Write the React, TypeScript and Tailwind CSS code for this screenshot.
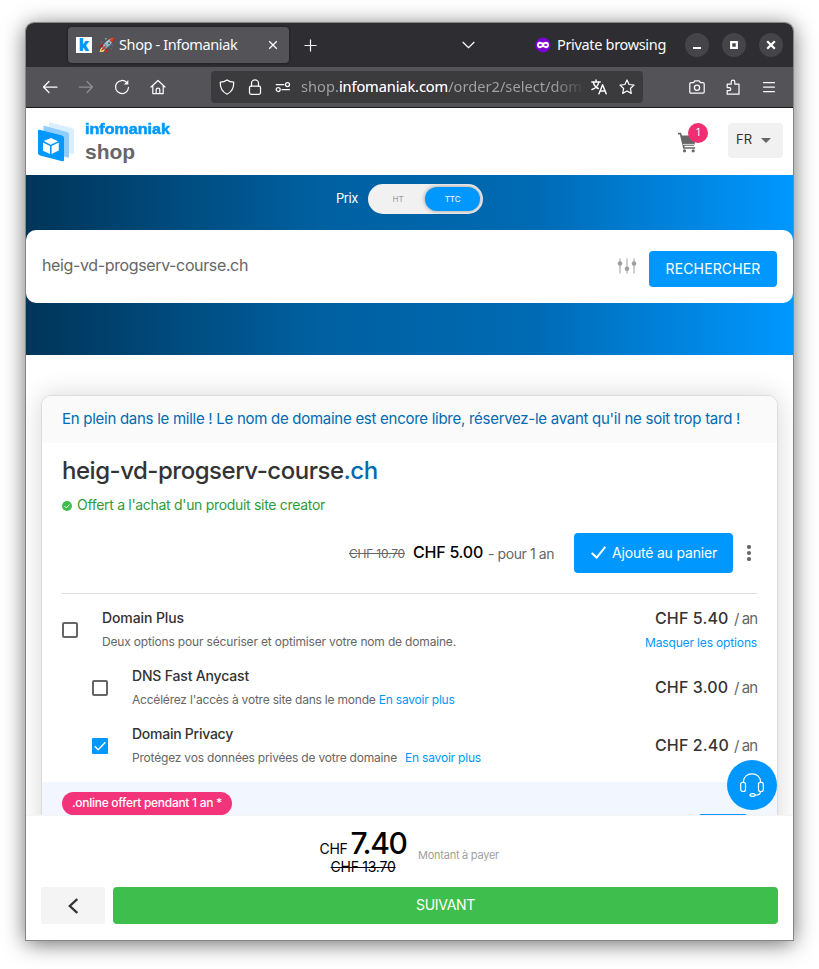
import type { ReactNode } from "react";

const sans = "font-['Inter','Liberation_Sans',sans-serif]";

function TitleBar() {
  return (
    <div className="flex h-[44px] shrink-0 items-center bg-[#2e2d32] pl-[42px] text-[14.5px] text-[#fbfbfe]">
      <div className="flex h-[36px] w-[221px] shrink-0 items-center rounded-[4px] bg-[#545358] pl-2 shadow-[0_0_3px_rgba(0,0,0,0.5)]">
        <div className="flex size-4 items-center justify-center bg-white font-['Inter',sans-serif] text-[17px] leading-[16px] font-black text-[#0098ff]">
          k
        </div>
        <span className="ml-[6px] w-[21px] shrink-0 font-['Noto_Color_Emoji'] text-[14px] leading-none">🚀</span>
        <span className="w-[149px] shrink-0 whitespace-pre tracking-[-0.38px]">Shop - Infomaniak</span>
        <svg className="size-[10px] shrink-0" viewBox="0 0 10 10" fill="none" stroke="currentColor" strokeWidth="1.3">
          <path d="M1.200 1.200l7.600 7.600M8.800 1.200L1.200 8.800" />
        </svg>
      </div>
      <svg className="ml-[15px] size-[13px]" viewBox="0 0 13 13" fill="none" stroke="currentColor" strokeWidth="1.2">
        <path d="M6.5.5v12M.5 6.5h12" />
      </svg>
      <svg className="ml-[145px] h-[8px] w-[13px]" viewBox="0 0 13 8" fill="none" stroke="currentColor" strokeWidth="1.3">
        <path d="M.7 1l5.800 5.600L12.300 1" />
      </svg>
      <svg className="ml-[60px] size-4" viewBox="0 0 16 16">
        <circle cx="8" cy="8" r="7.6" fill="#7a05d0" />
        <path
          d="M2 8c0-2 1.200-3.200 3-3.200 1.200 0 2 .8 3 .8s1.800-.8 3-.8c1.800 0 3 1.200 3 3.200s-1.300 3.200-3 3.200c-1.300 0-2-1.200-3-1.200s-1.700 1.200-3 1.200c-1.700 0-3-1.200-3-3.200z"
          fill="#fff"
        />
        <ellipse cx="5.300" cy="8" rx="1.600" ry="1.100" fill="#7a05d0" />
        <ellipse cx="10.700" cy="8" rx="1.600" ry="1.100" fill="#7a05d0" />
      </svg>
      <span className="ml-[6px] w-[128px] whitespace-pre tracking-[-0.33px]">Private browsing</span>
      <div className="flex gap-[13px]">
        <WindowButton>
          <path d="M8 15h8" strokeWidth="2.200" />
        </WindowButton>
        <WindowButton>
          <path d="M9.200 9.200h5.600v5.600H9.200z" strokeWidth="2.200" />
        </WindowButton>
        <WindowButton>
          <path d="M8.200 8.200l7.600 7.600M15.800 8.200l-7.600 7.600" strokeWidth="2.200" />
        </WindowButton>
      </div>
    </div>
  );
}

function WindowButton({ children }: { children: ReactNode }) {
  return (
    <div className="flex size-6 items-center justify-center rounded-full bg-[#454449]">
      <svg className="size-6" viewBox="0 0 24 24" fill="none" stroke="#fff">
        {children}
      </svg>
    </div>
  );
}

function Glyph({ className, children }: { className?: string; children: ReactNode }) {
  return (
    <svg
      className={`size-4 shrink-0 ${className ?? ""}`}
      viewBox="0 0 16 16"
      fill="none"
      stroke="currentColor"
      strokeWidth="1.250"
      strokeLinecap="round"
      strokeLinejoin="round"
    >
      {children}
    </svg>
  );
}

function NavBar() {
  return (
    <div className="flex h-[41px] shrink-0 items-center border-b border-[#1c1b22] bg-[#545358] pl-4 text-[#fbfbfe]">
      <Glyph>
        <path d="M15 8H1.500M7 2.500L1.500 8 7 13.500" />
      </Glyph>
      <Glyph className="ml-[20px] text-[#8f8e93]">
        <path d="M1 8h13.500M9 2.500L14.500 8 9 13.500" />
      </Glyph>
      <Glyph className="ml-[20px]">
        <path d="M14.500 8.500A6.500 6.500 0 1 1 12.800 3.600" />
        <path d="M14.300 1v4.500H9.800z" fill="currentColor" stroke="none" />
      </Glyph>
      <Glyph className="ml-[20px]">
        <path d="M1 8l7-6.500L15 8M2.800 6.500v8h10.400v-8M6.200 14.500v-3.700a1.800 1.800 0 0 1 3.600 0v3.700" />
      </Glyph>
      <div className="ml-[45px] flex h-8 w-[432px] shrink-0 items-center rounded-[4px] bg-[#3b3b3d] pl-2">
        <Glyph>
          <path d="M8 .9c2 1.600 4.300 2.200 6.700 2.200.3 5.200-2 9.700-6.700 12.100C3.300 12.800 1 8.300 1.300 3.100 3.700 3.100 6 2.500 8 .9z" />
        </Glyph>
        <Glyph className="ml-[12px]">
          <rect x="2.500" y="7" width="11" height="8.300" rx="1.500" />
          <path d="M4.500 7V4.300a3.500 3.500 0 0 1 7 0V7" />
        </Glyph>
        <Glyph className="ml-[12px]">
          <path d="M1.200 5.500H9M7 10.500h7.500" />
          <circle cx="12.500" cy="5.500" r="2" />
          <circle cx="3.200" cy="10.500" r="2" />
        </Glyph>
        <div className="ml-[10px] w-[281px] shrink-0 overflow-hidden bg-[linear-gradient(90deg,#a3a3a5_90%,#3b3b3d_101%)] bg-clip-text text-[14.6px] tracking-[0.03px] whitespace-pre text-transparent">
          shop.<span className="tracking-[-0.1px] text-[#fbfbfe]">infomaniak.com</span>/order2/select/dom
        </div>
        <Glyph className="ml-[9px]">
          <path d="M.8 3h8.400M5 1v2M2.300 3c.6 3 2.700 5.500 5 6.500M7.800 3C7.300 6.500 4 9.500 1 10.500" strokeWidth="1.500" />
          <path d="M8 14.800l3.600-9 3.600 9M9.300 12h4.700" strokeWidth="1.500" />
        </Glyph>
        <Glyph className="ml-[12px]">
          <path d="M8 1l2.100 4.500 4.900.6-3.600 3.400.9 4.900L8 12l-4.300 2.400.9-4.900L1 6.100l4.900-.6z" />
        </Glyph>
      </div>
      <Glyph className="ml-[46px]">
        <path d="M2 3.700h2.600l1.200-1.900h4.400l1.200 1.900H14a1.200 1.200 0 0 1 1.200 1.200v8a1.200 1.200 0 0 1-1.200 1.200H2a1.200 1.200 0 0 1-1.200-1.200v-8A1.200 1.200 0 0 1 2 3.700z" />
        <circle cx="8" cy="8.700" r="2.600" />
      </Glyph>
      <Glyph className="ml-[20px]">
        <path d="M2.200 7.500V5.200h4V3a1.800 1.800 0 0 1 3.600 0v2.200h4.200v10H2.200v-3.500h2a1.600 1.600 0 0 0 0-3.200h-2z" />
      </Glyph>
      <Glyph className="ml-[20px]">
        <path d="M2.500 3.500h11M2.500 8h11M2.500 12.500h11" />
      </Glyph>
    </div>
  );
}

function ShopHeader() {
  return (
    <header className="flex h-[67px] shrink-0 items-center bg-white pl-[11px]">
      <svg className="h-[42px] w-[38px]" viewBox="0 0 38 42">
        <path d="M12 2.500Q12 1 13.500 1.400L35 7q2 .7 2 2.500V32q0 1.500-1.500 1.100L14 27q-2-.7-2-2.500z" fill="#d9eeff" />
        <path d="M6.500 6Q6.500 4.500 8 4.900L30 11q2 .7 2 2.500V35.500q0 1.500-1.500 1.100L8.500 31q-2-.7-2-2.500z" fill="#8ecdff" />
        <path d="M1 10Q1 8.300 2.700 8.800L25 14.600q2 .7 2 2.500V39q0 1.700-1.700 1.200L3 34.600q-2-.7-2-2.500z" fill="#0098ff" />
        <path d="M14 17l7 3.200-7.300 3.500L6.700 20zM6 21.500l7 3.500v8l-7-3.300zM21.800 21.500v8L14.600 33v-8z" fill="#fff" />
      </svg>
      <div className="ml-[10px] flex flex-col font-['Liberation_Sans',sans-serif] font-bold">
        <span className="origin-left scale-x-[1.150] text-[14px] leading-[20px] text-[#0098ff] [-webkit-text-stroke:0.5px_#0098ff]">infomaniak</span>
        <span className="text-[21px] leading-[26px] text-[#666]">shop</span>
      </div>
      <div className="relative ml-auto h-[30px] w-[31px]">
        <svg className="mt-[5px] size-[21px]" viewBox="0 0 21 21">
          <path d="M1 .8h3l1 2.700h15l-3 10.300H7.200l.5 1.400h10.500v1.600H6.200L2.900 2.400H1z" fill="#666" />
          <path d="M5.800 12.400h11.300" stroke="#fff" strokeWidth=".8" />
          <circle cx="7.500" cy="18.800" r="1.600" fill="#666" />
          <circle cx="16.200" cy="18.800" r="1.600" fill="#666" />
        </svg>
        <span className="absolute top-[-4px] right-0 flex size-5 items-center justify-center rounded-full bg-[#f02e71] text-[10px] text-white">
          1
        </span>
      </div>
      <div className="mr-[10px] mb-[2px] ml-[20px] flex h-[35px] w-[55px] items-center rounded-[4px] bg-[#f1f1f1] pb-px pl-2 text-[13px] text-[#333]">
        FR
        <svg className="ml-[9px] h-[5px] w-[10px]" viewBox="0 0 10 5">
          <path d="M0 0h10L5 5z" fill="#666" />
        </svg>
      </div>
    </header>
  );
}

function SearchBand() {
  return (
    <section className="flex h-[180px] shrink-0 flex-col bg-[linear-gradient(90deg,#003558_0%,#0060a0_38%,#006ab3_66%,#0098ff_100%)]">
      <div className="flex h-[55px] items-start justify-center pt-[9px]">
        <span className="mr-[10px] text-[13px] leading-[29px] tracking-[-0.35px] text-white">Prix</span>
        <div className="flex h-[30px] w-[115px] items-center rounded-full bg-[#f1f1f1] p-[3px] text-[8px] text-[#999]">
          <span className="w-[54px] text-center">HT</span>
          <span className="flex h-6 w-[55px] items-center justify-center rounded-full bg-[#0098ff] text-white shadow-[0_0_4px_rgba(0,0,0,0.4)]">
            TTC
          </span>
        </div>
      </div>
      <div className="flex h-[73px] items-center rounded-[10px] bg-white px-4">
        <span className="pb-[4px] text-[16px] tracking-[-0.37px] text-[#666]">heig-vd-progserv-course.ch</span>
        <svg className="mr-3 mb-px ml-auto h-4 w-5" viewBox="0 0 20 16">
          <path d="M3 .5v15M10 .5v15M17 .5v15" stroke="#9f9f9f" strokeWidth="1" />
          <circle cx="3" cy="5.500" r="2.300" fill="#9f9f9f" />
          <circle cx="10" cy="10.800" r="2.300" fill="#9f9f9f" />
          <circle cx="17" cy="5.500" r="2.300" fill="#9f9f9f" />
        </svg>
        <button className="mt-[5px] h-9 w-32 rounded-[4px] bg-[#0098ff] pb-[2px] text-[14px] tracking-[0.14px] text-white">
          RECHERCHER
        </button>
      </div>
    </section>
  );
}

function CheckBox({ checked }: { checked?: boolean }) {
  return checked ? (
    <span className="flex size-4 shrink-0 items-center justify-center rounded-[1px] bg-[#0098ff]">
      <svg className="size-4" viewBox="0 0 16 16" fill="none" stroke="#fff" strokeWidth="1.500">
        <path d="M2.700 8.300l3.500 3.400 7.200-7.400" />
      </svg>
    </span>
  ) : (
    <span className="size-4 shrink-0 rounded-[2px] border-2 border-[#666]" />
  );
}

function Option(props: { nested?: boolean; checked?: boolean; title: ReactNode; text: ReactNode; price: string; extra?: ReactNode }) {
  return (
    <div className={`flex h-12 items-center ${props.nested ? "pl-[30px]" : ""}`}>
      <CheckBox checked={props.checked} />
      <div className="ml-6 flex flex-col whitespace-pre">
        <span className="text-[14px] leading-6 font-medium text-[#333]">{props.title}</span>
        <span className="text-[12px] leading-6 text-[#666]">{props.text}</span>
      </div>
      <div className="ml-auto flex flex-col items-end whitespace-pre">
        <div className={`flex items-baseline text-[16px] leading-6 text-[#666] ${props.nested ? "pb-[2px]" : ""}`}>
          <span className="mr-[5px] w-[74px] font-medium tracking-[0.13px] text-[#333]">{props.price}</span>
          <span className="w-[23px] text-[15px] tracking-[-0.95px]">/ an</span>
        </div>
        {props.extra}
      </div>
    </div>
  );
}

function ResultCard() {
  return (
    <section className="mx-[15px] mt-[40px] flex h-[500px] shrink-0 flex-col overflow-hidden rounded-[10px] border border-[#dcdcdc] bg-white shadow-[0_0_26px_rgba(0,0,0,0.16)]">
      <div className="h-[47px] shrink-0 bg-[#fafafa] pl-5 text-[15px] leading-[46px] tracking-[-0.273px] whitespace-pre text-[#006ab3]">
        En plein dans le mille ! Le nom de domaine est encore libre, réservez-le avant qu'il ne soit trop tard !
      </div>
      <div className="mx-5 flex flex-col border-b border-[#dcdcdc] pt-[10px] pb-5">
        <h1 className="text-[24px] leading-[36px] font-medium tracking-[-0.48px] text-[#333]">
          heig-vd-progserv-course<span className="text-[#006ab3]">.ch</span>
        </h1>
        <div className="mt-[7px] flex h-5 items-center text-[14px] leading-[18px] tracking-[-0.306px] text-[#2e9b3b]">
          <svg className="mr-[5px] size-[10px]" viewBox="0 0 10 10">
            <circle cx="5" cy="5" r="5" fill="#3ebf4d" />
            <path d="M2.600 5.200l1.700 1.700 3.200-3.400" fill="none" stroke="#fff" strokeWidth="1" />
          </svg>
          <span className="pb-[2px]">Offert a l'achat d'un produit site creator</span>
        </div>
        <div className="mt-[17px] flex h-10 items-center justify-end whitespace-pre text-[#666]">
          <span className="mr-2 pt-px text-[12px] tracking-[-0.194px] line-through">CHF 10.70</span>
          <span className="mr-[5px] pb-[2px] text-[16px] font-medium tracking-[-0.238px] text-black">CHF 5.00</span>
          <span className="mr-5 text-[14px] tracking-[-0.419px]">- pour 1 an</span>
          <button className="flex h-10 w-[159px] items-center rounded-[4px] bg-[#0098ff] pb-[2px] pl-[17px] text-[14px] tracking-[-0.188px] text-white">
            <svg className="mt-px mr-[6px] h-[13px] w-[15px]" viewBox="0 0 15 13" fill="none" stroke="#fff" strokeWidth="2">
              <path d="M.7 7l5 4.600L14.300.8" />
            </svg>
            Ajouté au panier
          </button>
          <svg className="mr-[5px] ml-[13px] h-4 w-[6px]" viewBox="0 0 6 16" fill="#666">
            <circle cx="3" cy="2" r="2.100" />
            <circle cx="3" cy="8" r="2.100" />
            <circle cx="3" cy="14" r="2.100" />
          </svg>
        </div>
      </div>
      <div className="mx-5 flex flex-col gap-[10px] py-3">
        <Option
          title={<span className="tracking-[-0.1px]">Domain Plus</span>}
          text={<span className="tracking-[-0.169px]">Deux options pour sécuriser et optimiser votre nom de domaine.</span>}
          price="CHF 5.40"
          extra={<span className="text-[12px] leading-6 tracking-[-0.15px] text-[#0098ff]">Masquer les options</span>}
        />
        <Option
          nested
          title={<span className="tracking-[-0.175px]">DNS Fast Anycast</span>}
          text={
            <span className="tracking-[-0.21px]">
              Accélérez l'accès à votre site dans le monde <span className="text-[#0098ff]">En savoir plus</span>
            </span>
          }
          price="CHF 3.00"
        />
        <Option
          nested
          checked
          title={<span className="tracking-[-0.251px]">Domain Privacy</span>}
          text={
            <span className="tracking-[-0.2px]">
              Protégez vos données privées de votre domaine<span className="ml-2 text-[#0098ff]">En savoir plus</span>
            </span>
          }
          price="CHF 2.40"
        />
      </div>
      <div className="flex grow items-start justify-between bg-[#f2f6ff] pt-[10px] pr-[29px] pl-5">
        <span className="h-[23px] w-[170px] rounded-full bg-[#f4347a] text-center text-[12px] leading-[22px] font-medium tracking-[-0.291px] whitespace-pre text-white">
          .online offert pendant 1 an *
        </span>
        <span className="mt-[22px] h-10 w-[50px] rounded-[4px] bg-[#0098ff]" />
      </div>
    </section>
  );
}

function Footer() {
  return (
    <footer className="flex h-[125px] shrink-0 flex-col border-t border-[#f4f4f6] bg-white">
      <div className="flex h-[71px] items-start pt-[9px] pl-[292px]">
        <div className="flex w-[90px] flex-col items-center text-black">
          <div className="flex h-[34px] items-baseline">
            <span className="mr-[3px] text-[14px] leading-[36px] tracking-[-0.3px]">CHF</span>
            <span className="text-[30px] leading-[36px] font-medium tracking-[-1.387px]">7.40</span>
          </div>
          <span className="text-[14px] leading-[16px] tracking-[-0.248px] line-through">CHF 13.70</span>
        </div>
        <span className="ml-[10px] pt-[22px] text-[11px] leading-[16px] tracking-[-0.247px] text-[#9f9f9f]">Montant à payer</span>
      </div>
      <div className="flex gap-2 px-[15px]">
        <div className="flex h-[37px] w-16 items-center justify-center rounded-[2px] bg-[#f4f4f4]">
          <svg className="h-4 w-[10px]" viewBox="0 0 10 16" fill="none" stroke="#333" strokeWidth="2.300">
            <path d="M9.300 1L1.800 8l7.500 7" />
          </svg>
        </div>
        <button className="h-[37px] grow rounded-[4px] bg-[#3ebf4d] pb-[2px] text-[14px] tracking-[-0.3px] text-white">SUIVANT</button>
      </div>
    </footer>
  );
}

export default function App() {
  return (
    <div className="h-[969px] w-[819px] overflow-hidden bg-white pt-[23px] pl-[26px]">
      <div className="relative flex h-[917px] w-[767px] flex-col rounded-t-[8px] bg-white font-['Noto_Sans',sans-serif] shadow-[0_0_0_1px_#868686,0_3px_22px_rgba(0,0,0,0.62)]">
        <div className="flex shrink-0 flex-col overflow-hidden rounded-t-[8px]">
          <TitleBar />
          <NavBar />
        </div>
        <div className={`flex min-h-0 grow flex-col overflow-hidden ${sans}`}>
          <ShopHeader />
          <SearchBand />
          <ResultCard />
        </div>
        <div className={sans}>
          <Footer />
        </div>
        <div className="absolute right-4 bottom-[130px] flex size-[50px] items-center justify-center rounded-full bg-[#0098ff]">
          <svg className="size-6" viewBox="0 0 24 24" fill="none" stroke="#fff" strokeWidth="1.200">
            <path d="M3.300 9.500C3.300 4 7 .8 12 .8s8.700 3.200 8.700 8.700" />
            <rect x=".7" y="9.300" width="4.800" height="9.200" rx="2" />
            <rect x="18.500" y="9.300" width="4.800" height="9.200" rx="2" />
            <path d="M20.500 18.500c0 2.500-2 3.700-5.200 3.700" />
            <ellipse cx="12.600" cy="22" rx="2.600" ry="1.400" />
          </svg>
        </div>
      </div>
    </div>
  );
}
